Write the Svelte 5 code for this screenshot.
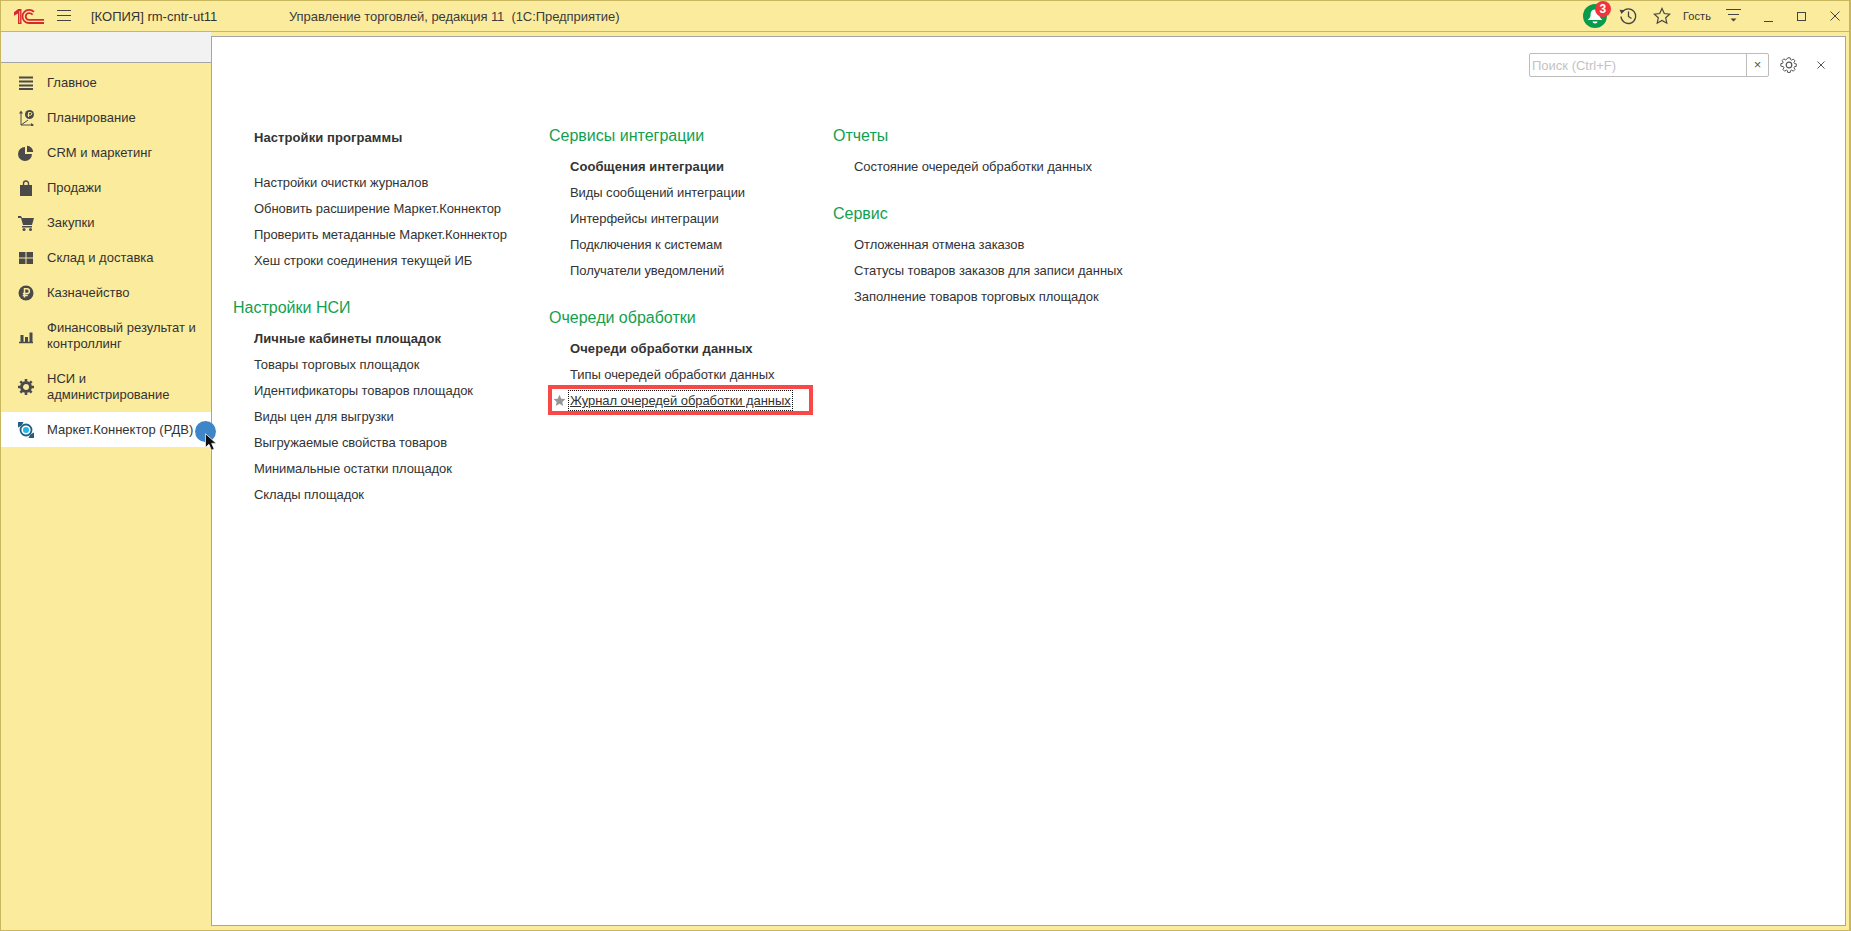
<script>
  const nav = [
    { id: 'menu', label: 'Главное' },
    { id: 'plan', label: 'Планирование' },
    { id: 'pie', label: 'CRM и маркетинг' },
    { id: 'bag', label: 'Продажи' },
    { id: 'cart', label: 'Закупки' },
    { id: 'grid', label: 'Склад и доставка' },
    { id: 'rub', label: 'Казначейство' },
    { id: 'bars', label: 'Финансовый результат и контроллинг', tall: true },
    { id: 'gear', label: 'НСИ и администрирование', tall: true },
    { id: 'mk', label: 'Маркет.Коннектор (РДВ)', active: true }
  ];
  const col2 = [
    { title: 'Сервисы интеграции', items: [
      { t: 'Сообщения интеграции', b: true }, { t: 'Виды сообщений интеграции' }, { t: 'Интерфейсы интеграции' }, { t: 'Подключения к системам' }, { t: 'Получатели уведомлений' } ] },
    { title: 'Очереди обработки', items: [
      { t: 'Очереди обработки данных', b: true }, { t: 'Типы очередей обработки данных' }, { t: 'Журнал очередей обработки данных', focus: true } ] }
  ];
  const col3 = [
    { title: 'Отчеты', items: [{ t: 'Состояние очередей обработки данных' }] },
    { title: 'Сервис', items: [{ t: 'Отложенная отмена заказов' }, { t: 'Статусы товаров заказов для записи данных' }, { t: 'Заполнение товаров торговых площадок' }] }
  ];
  const top1 = ['Настройки очистки журналов', 'Обновить расширение Маркет.Коннектор', 'Проверить метаданные Маркет.Коннектор', 'Хеш строки соединения текущей ИБ'];
  const nsi = [
    { t: 'Личные кабинеты площадок', b: true }, { t: 'Товары торговых площадок' }, { t: 'Идентификаторы товаров площадок' }, { t: 'Виды цен для выгрузки' }, { t: 'Выгружаемые свойства товаров' }, { t: 'Минимальные остатки площадок' }, { t: 'Склады площадок' }
  ];
</script>

{#snippet section(g)}
  <section class="group">
    <h2>{g.title}</h2>
    {#each g.items as it}
      {#if it.focus}
        <div class="link focusrow">
          <svg class="star" viewBox="0 0 14 14" width="13" height="13"><path d="M7 .8l1.900 4.200 4.500.5-3.400 3 1 4.500L7 10.600 3 13l1-4.500-3.400-3 4.500-.5z" fill="#969696"/></svg>
          <span class="focused">{it.t}</span>
        </div>
      {:else}
        <div class="link" class:bold={it.b}>{it.t}</div>
      {/if}
    {/each}
  </section>
{/snippet}

<div class="win">
  <header class="title">
    <svg class="logo" viewBox="0 0 30 15" width="30" height="15">
      <path d="M0 3.200L4.200 0H7.500V15H4V4.600L0 6.800z" fill="#d9272e"/>
      <path d="M5.700 2V14" stroke="#fbeb9d" stroke-width=".7"/>
      <g fill="none" stroke="#d9272e" stroke-width="1.800">
        <path d="M20 2.800C18.400 1.200 16.800 .9 15 .9A6.500 6.500 0 0 0 15 14H30"/>
        <path d="M18.600 5.600C17.600 4.500 16.200 4.200 15 4.200A3.300 3.300 0 0 0 15 10.800H30"/>
      </g>
    </svg>
    <svg class="burger" viewBox="0 0 14 12" width="14" height="12"><path d="M0 .5h14M0 5.500h14M0 10.500h14" stroke="#444" fill="none"/></svg>
    <span class="base">[КОПИЯ] rm-cntr-ut11</span>
    <span class="app">Управление торговлей, редакция 11&nbsp; (1С:Предприятие)</span>
    <div class="tools">
      <div class="bell">
        <svg viewBox="0 0 24 24" width="24" height="24"><circle cx="12" cy="12" r="12" fill="#0a9a4c"/><path d="M12 5.500c-3 0-4.400 2.300-4.400 5 0 2.500-1 3.500-3 5.500h14.800c-2-2-3-3-3-5.500 0-2.700-1.400-5-4.400-5z" fill="#fff"/><path d="M9.500 17.500h5a2.500 2 0 0 1-5 0z" fill="#fff"/></svg>
        <b>3</b>
      </div>
      <svg class="hist" viewBox="0 0 18 18" width="18" height="18"><g fill="none" stroke="#444" stroke-width="1.300"><path d="M3.300 5a7.300 7.300 0 1 1-1.300 4.500"/><path d="M9.500 4.500V9.500l3 2"/></g><path d="M.6 2.800l5.200.4-3.400 3.900z" fill="#444"/></svg>
      <svg class="fav" viewBox="0 0 18 18" width="18" height="18"><path d="M9 1.500l2.300 5 5.400.6-4 3.700 1.100 5.400L9 13.500l-4.800 2.700 1.100-5.400-4-3.700 5.400-.6z" fill="none" stroke="#444" stroke-width="1.200"/></svg>
      <span class="user">Гость</span>
      <svg class="more" viewBox="0 0 16 14" width="16" height="14"><path d="M0 .5h15M2 5.500h11" stroke="#444" fill="none"/><path d="M4.500 9.500h6l-3 3z" fill="#444"/></svg>
      <span class="min"></span>
      <span class="max"></span>
      <svg class="cls" viewBox="0 0 10 10" width="10" height="10"><path d="M.5.500l9 9M9.500.500l-9 9" stroke="#444" fill="none"/></svg>
    </div>
  </header>

  <div class="body">
    <aside>
      <div class="band"></div>
      <nav>
        {#each nav as n}
          <div class="item" class:tall={n.tall} class:active={n.active}>
            <svg class="ic" viewBox="0 0 16 16" width="16" height="16">
              {#if n.id === 'menu'}
                <path d="M1 1.500h14v2H1zM1 5.500h14v2H1zM1 9.500h14v2H1zM1 13h14v2H1z" fill="#4a4a4a"/>
              {:else if n.id === 'plan'}
                <path d="M3 3v12h12M3 15l7-5" fill="none" stroke="#4a4a4a"/><path d="M3 .5l-2 3h4zM16 15l-3-2v4z" fill="#4a4a4a"/><circle cx="11.500" cy="4.500" r="4.500" fill="#4a4a4a"/><path d="M10.500 7V2.500h2a1.200 1.200 0 0 1 0 2.600h-3" fill="none" stroke="#fbeb9d"/>
              {:else if n.id === 'pie'}
                <path d="M7 2a7 7 0 1 0 7 7H7z" fill="#4a4a4a"/><path d="M9 .8a6.300 6.300 0 0 1 6.200 6.200H9z" fill="#4a4a4a"/>
              {:else if n.id === 'bag'}
                <path d="M2 5h12v11H2z" fill="#4a4a4a"/><path d="M5.500 7V3.500a2.500 2.500 0 0 1 5 0V7" fill="none" stroke="#4a4a4a" stroke-width="1.400"/>
              {:else if n.id === 'cart'}
                <path d="M0 1h3l1 2h12l-2 7H5L3 3H0z" fill="#4a4a4a"/><path d="M4 11h10v1.500H4z" fill="#4a4a4a"/><circle cx="6" cy="14.500" r="1.500" fill="#4a4a4a"/><circle cx="12.500" cy="14.500" r="1.500" fill="#4a4a4a"/>
              {:else if n.id === 'grid'}
                <path d="M1 2h6.500v5.500H1zM8.500 2H15v5.500H8.500zM1 8.500h6.500V14H1zM8.500 8.500H15V14H8.500z" fill="#4a4a4a"/>
              {:else if n.id === 'rub'}
                <circle cx="8" cy="8" r="7.500" fill="#4a4a4a"/><path d="M6.500 12.500V3.800h2.500a2.300 2.300 0 0 1 0 4.700H4.800M4.800 10.500h5" fill="none" stroke="#fbeb9d" stroke-width="1.500"/>
              {:else if n.id === 'bars'}
                <path d="M1 14.500h14" stroke="#4a4a4a" stroke-width="1.500"/><path d="M2.500 7h3v7h-3zM7 9h3v5H7zM11.500 4.500h3V14h-3z" fill="#4a4a4a"/>
              {:else if n.id === 'gear'}
                <circle cx="8" cy="8" r="4.500" fill="none" stroke="#4a4a4a" stroke-width="3"/><path d="M8 0v16M0 8h16M2.300 2.300l11.400 11.400M13.700 2.300L2.300 13.700" stroke="#4a4a4a" stroke-width="2.600" stroke-dasharray="2.600 10.800"/>
              {:else}
                <circle cx="8" cy="8" r="5.500" fill="none" stroke="#1f5f86" stroke-width="1.800"/><circle cx="8" cy="8" r="3" fill="#1fb6ea"/><path d="M0 0h5.500L4 3 3 4 0 5.500zM16 16h-5.500L12 13l1-1 3-1.500z" fill="#1f5f86"/>
              {/if}
            </svg>
            <span>{n.label}</span>
            {#if n.active}
              <i class="dot"></i>
              <svg class="cursor" viewBox="0 0 12 19" width="11" height="18"><path d="M.5.500v15l3.800-3.500 2.700 6.500 3-1.300-2.700-6.200h5z" fill="#111" stroke="#fff" stroke-width=".8"/></svg>
            {/if}
          </div>
        {/each}
      </nav>
    </aside>

    <main>
      <div class="search">
        <div class="field"><span class="ph">Поиск (Ctrl+F)</span><span class="clr">×</span></div>
        <svg class="cfg" viewBox="0 0 18 18" width="18" height="18"><path d="M7.500 1h3l.4 2.200 1.400.6 1.900-1.300 2.100 2.100-1.300 1.900.6 1.400 2.200.4v3l-2.200.4-.6 1.400 1.300 1.900-2.100 2.100-1.900-1.300-1.400.6-.4 2.200h-3l-.4-2.200-1.400-.6-1.900 1.300-2.100-2.100 1.300-1.900-.6-1.400L-.8 11V8l2.200-.4.600-1.400-1.300-1.900 2.100-2.100 1.900 1.300 1.400-.6z" transform="translate(1.500 1) scale(.83)" fill="none" stroke="#555" stroke-width="1.200"/><circle cx="9" cy="9" r="2.800" fill="none" stroke="#555" stroke-width="1.200"/></svg>
        <svg class="x" viewBox="0 0 8 8" width="8" height="8"><path d="M.5.500l7 7M7.500.500l-7 7" stroke="#555" fill="none"/></svg>
      </div>

      <div class="cols">
        <div class="col c1">
          <div class="link bold first">Настройки программы</div>
          <div class="sub">
            {#each top1 as t}<div class="link">{t}</div>{/each}
          </div>
          {@render section({ title: 'Настройки НСИ', items: nsi })}
        </div>
        <div class="col c2">
          {#each col2 as g}{@render section(g)}{/each}
        </div>
        <div class="col c3">
          {#each col3 as g}{@render section(g)}{/each}
        </div>
      </div>
    </main>
  </div>
</div>

<style>
  :global(body) { margin: 0; background: #fbeb9d; }
  .win {
    width: 1851px; height: 931px; box-sizing: border-box;
    border: 1px solid #c9b75f; border-right-width: 2px;
    background: #fbeb9d; display: flex; flex-direction: column;
    font: 13px "Liberation Sans", Arial, sans-serif; color: #333; overflow: hidden;
  }
  .title {
    height: 30px; flex: none; display: flex; align-items: center;
    border-bottom: 1px solid #c9b75f; box-sizing: content-box;
    font-size: 13px;
  }
  .logo { margin-left: 13px; }
  .burger { margin-left: 13px; }
  .base { margin-left: 20px; width: 198px; }
  .app { color: #3c3c3c; letter-spacing: -.06px; }
  .tools { margin-left: auto; display: flex; align-items: center; height: 100%; }
  .bell { position: relative; width: 24px; height: 24px; margin-right: 12px; }
  .bell svg { display: block; }
  .bell b {
    position: absolute; left: 12px; top: -3px; width: 16px; height: 16px; border-radius: 50%;
    background: #f0353d; color: #fff; font-size: 12px; line-height: 16px; text-align: center;
  }
  .hist { margin-right: 16px; }
  .fav { margin-right: 12px; }
  .user { font-size: 11px; margin-right: 15px; letter-spacing: .1px; }
  .more { margin-right: 22px; }
  .min { width: 9px; height: 1px; background: #444; margin: 10px 24px 0 0; }
  .max { width: 7px; height: 7px; border: 1px solid #444; margin-right: 24px; }
  .cls { margin-right: 9px; }

  .body { flex: 1; display: flex; min-height: 0; }
  aside { width: 210px; flex: none; display: flex; flex-direction: column; }
  .band { height: 30px; flex: none; background: #f2f2f2; border-bottom: 1px solid #a5a5a5; }
  nav { padding-top: 2px; }
  .item {
    position: relative; height: 35px; display: flex; align-items: center;
    padding-left: 17px; box-sizing: border-box; gap: 13px; line-height: 16px;
  }
  .item span { width: 158px; flex: none; white-space: normal; }
  .item.tall { height: 51px; }
  .ic { flex: none; }
  .active { background: #fff; }
  .active span { white-space: nowrap; }
  .dot {
    position: absolute; left: 194px; top: 9px; width: 21px; height: 21px; border-radius: 50%;
    background: #3e86c8; z-index: 3;
  }
  .cursor { position: absolute; left: 204px; top: 21px; z-index: 4; }

  main {
    flex: 1; background: #fff; margin: 4px 3px 4px 0;
    border: 1px solid #a5a5a5; position: relative; min-width: 0;
  }
  .search { position: absolute; right: 0; top: 16px; display: flex; align-items: center; }
  .field {
    width: 238px; height: 22px; border: 1px solid #bcbcbc; border-radius: 2px;
    display: flex; align-items: center; justify-content: space-between;
  }
  .ph { color: #c3c3c3; font-size: 13px; padding-left: 2px; }
  .clr { width: 21px; height: 22px; border-left: 1px solid #bcbcbc; text-align: center; line-height: 22px; color: #555; font-size: 13px; }
  .cfg { margin-left: 11px; }
  .x { margin: 0 20px 0 19px; }

  .cols { display: flex; padding-top: 88px; }
  .col { flex: none; }
  .c1 { width: 316px; padding-left: 21px; box-sizing: content-box; }
  .c2 { width: 284px; }
  h2 { margin: 0; font: 400 16px/22px "Liberation Sans", Arial, sans-serif; color: #12a04f; height: 29px; }
  .group + .group { margin-top: 23px; }
  .sub { margin: 19px 0 23px; }
  .link { height: 26px; line-height: 26px; padding-left: 21px; white-space: nowrap; position: relative; letter-spacing: -.07px; }
  .bold { font-weight: 700; letter-spacing: .08px; }
  .focusrow::after {
    content: ""; position: absolute; left: -1px; top: -3px; width: 265px; height: 30px;
    border: 4px solid #f94848; box-sizing: border-box;
  }
  .star { position: absolute; left: 4px; top: 6px; }
  .focused { display: inline-block; line-height: 17px; vertical-align: middle; text-decoration: underline; outline: 1px dotted #111; outline-offset: 1px; position: relative; top: -1px; }
</style>
